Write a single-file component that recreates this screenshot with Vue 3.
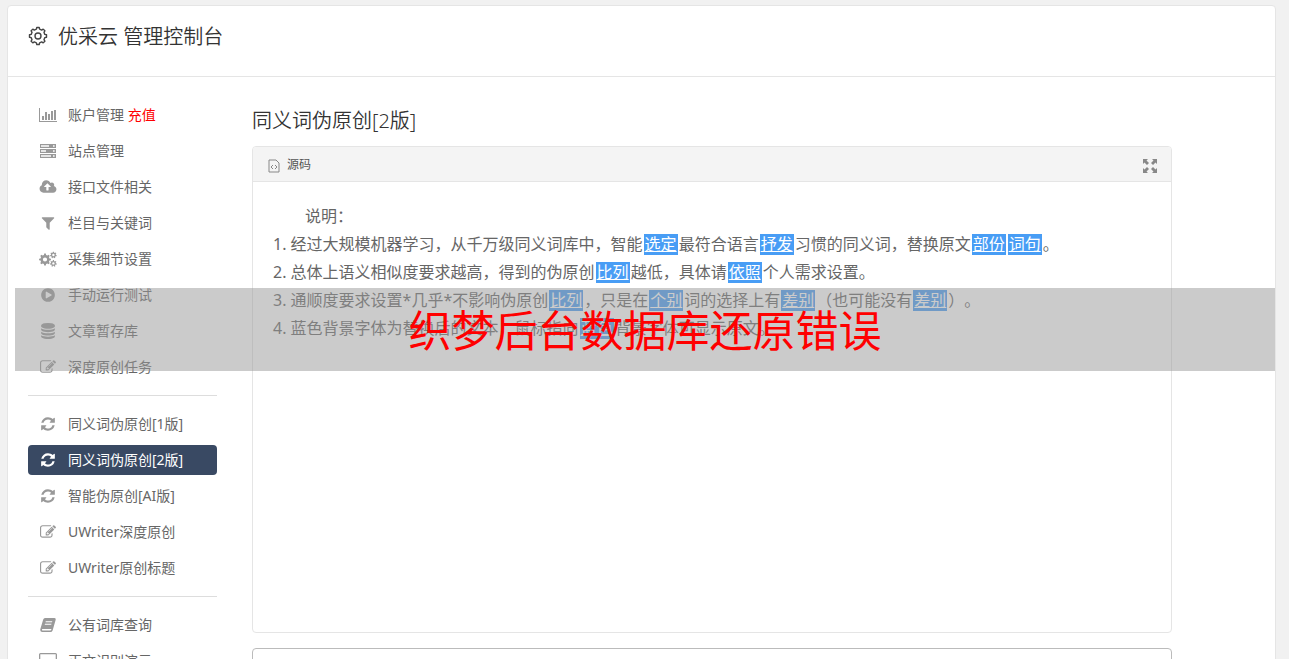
<script setup>
function gear(cx, cy, ro, ri, teeth) {
  const pts = []
  const step = (Math.PI * 2) / teeth
  for (let i = 0; i < teeth; i++) {
    const a = i * step - Math.PI / 2
    for (const [k, r] of [[-0.3, ri], [-0.18, ro], [0.18, ro], [0.3, ri]]) {
      pts.push(`${(cx + r * Math.cos(a + k * step)).toFixed(2)} ${(cy + r * Math.sin(a + k * step)).toFixed(2)}`)
    }
  }
  return `M${pts.join('L')}Z`
}
function ring(cx, cy, r) {
  return `M${cx - r} ${cy}a${r} ${r} 0 1 0 ${r * 2} 0a${r} ${r} 0 1 0 ${-r * 2} 0Z`
}

const edit = { box: '0 0 1792 1792', d: 'M888 1184l116-116-152-152-116 116v56h96v96h56zm440-720q-16-16-33 1l-350 350q-17 17-1 33t33-1l350-350q17-17 1-33zm80 594v190q0 119-84.5 203.5t-203.5 84.5h-832q-119 0-203.5-84.5t-84.5-203.5v-832q0-119 84.5-203.5t203.5-84.5h832q63 0 117 25 15 7 18 23 3 17-9 29l-49 49q-14 14-32 8-23-6-45-6h-832q-66 0-113 47t-47 113v832q0 66 47 113t113 47h832q66 0 113-47t47-113v-126q0-13 9-22l64-64q15-15 35-7t20 29zm-96-738l288 288-672 672h-288v-288zm444 132l-92 92-288-288 92-92q28-28 68-28t68 28l152 152q28 28 28 68t-28 68z' }
const refresh = { box: '0 0 1792 1792', d: 'M1639 1056q0 5-1 7-64 268-268 434.5t-478 166.5q-146 0-282.5-55t-243.5-157l-129 129q-19 19-45 19t-45-19-19-45v-448q0-26 19-45t45-19h448q26 0 45 19t19 45-19 45l-137 137q71 66 161 102t187 36q134 0 250-65t186-179q11-17 53-117 8-23 30-23h192q13 0 22.5 9.5t9.5 22.5zm25-800v448q0 26-19 45t-45 19h-448q-26 0-45-19t-19-45 19-45l138-138q-148-137-349-137-134 0-250 65t-186 179q-11 17-53 117-8 23-30 23h-199q-13 0-22.5-9.5t-9.5-22.5v-7q65-268 270-434.5t480-166.5q146 0 284 55.5t245 156.5l130-129q19-19 45-19t45 19 19 45z' }
const chart = { box: '0 0 18 16', d: 'M0 1h1v13h17v1H0ZM3 9h2v4H3ZM6 5h2v8H6ZM9 7h2v6H9ZM12 4h2v9h-2ZM15 3h2v10h-2Z' }
const server = { box: '0 0 18 16', d: 'M1 1h16v4H1ZM2 2.2v1.600h8V2.200ZM14 2.200v1.600h1.600V2.200ZM1 6h16v4H1ZM2 7.200v1.600h5V7.200ZM14 7.200v1.600h1.600V7.200ZM1 11h16v4H1ZM2 12.200v1.600h10v-1.600ZM14 12.200v1.600h1.600v-1.600Z' }
const cloud = { box: '0 0 2048 1792', d: 'M1344 864q0-14-9-23l-352-352q-9-9-23-9t-23 9l-351 351q-10 12-10 24 0 14 9 23t23 9h224v352q0 13 9.5 22.5t22.5 9.5h192q13 0 22.5-9.5t9.5-22.5v-352h224q13 0 22.5-9.5t9.5-22.5zm640 288q0 159-112.5 271.5t-271.5 112.5h-1088q-185 0-316.5-131.5t-131.5-316.5q0-130 70-240t188-165q-2-30-2-43 0-212 150-362t362-150q156 0 285.5 87t188.5 231q71-62 166-62 106 0 181 75t75 181q0 76-41 138 130 31 213.5 135.5t83.5 238.5z' }
const filter = { box: '0 0 1792 1792', d: 'M1595 295q17 41-14 70l-493 493v742q0 42-39 59-13 5-25 5-27 0-45-19l-256-256q-19-19-19-45v-486l-493-493q-31-29-14-70 17-39 59-39h1280q42 0 59 39z' }
const cogs = { box: '0 0 18 16', d: gear(6, 8.5, 6, 4.6, 8) + ring(6, 8.5, 2.1) + gear(14.4, 4, 3.4, 2.5, 7) + ring(14.4, 4, 1.2) + gear(14.4, 12.4, 3.4, 2.5, 7) + ring(14.4, 12.4, 1.2) }
const play = { box: '0 0 1792 1792', d: 'M896 128q209 0 385.5 103t279.5 279.5 103 385.5-103 385.5-279.5 279.5-385.5 103-385.5-103-279.5-279.5-103-385.5 103-385.5 279.5-279.5 385.5-103zm384 823q32-18 32-55t-32-55l-544-320q-31-19-64-1-32 19-32 56v640q0 37 32 56 16 8 32 8 17 0 32-9z' }
const database = { box: '0 0 1792 1792', d: 'M896 768q237 0 443-43t325-127v170q0 69-103 128t-280 93.5-385 34.5-385-34.5-280-93.5-103-128v-170q119 84 325 127t443 43zm0 768q237 0 443-43t325-127v170q0 69-103 128t-280 93.5-385 34.5-385-34.5-280-93.5-103-128v-170q119 84 325 127t443 43zm0-384q237 0 443-43t325-127v170q0 69-103 128t-280 93.5-385 34.5-385-34.5-280-93.5-103-128v-170q119 84 325 127t443 43zm0-1152q208 0 385 34.5t280 93.5 103 128v128q0 69-103 128t-280 93.5-385 34.5-385-34.5-280-93.5-103-128v-128q0-69 103-128t280-93.5 385-34.5z' }
const book = { box: '0 0 18 16', d: 'M6 1h9.5q1.6.2 1.2 1.8L13.6 13.4q-.6 1.6-2.2 1.6H3q-2-.3-1.8-2.4L4.200 2.600Q4.700 1 6 1ZM6.800 4.200 6.500 5.200h6.500l.3-1ZM6 6.700 5.700 7.700h6.500l.3-1ZM3 12.300q-.3 1.300.6 1.300h7.600q.8 0 1.100-1l.2-.6H3.600Q3.100 12 3 12.300Z' }
const desktop = { box: '0 0 18 16', d: 'M1.500 0h15q1.500 0 1.500 1.500v10q0 1.500-1.500 1.500H11l1 2H6l1-2H1.500Q0 13 0 11.500v-10Q0 0 1.500 0ZM1.300 1.300v8.700h15.400V1.300Z' }

const groups = [
  [
    { text: '账户管理', extra: '充值', icon: chart },
    { text: '站点管理', icon: server },
    { text: '接口文件相关', icon: cloud },
    { text: '栏目与关键词', icon: filter },
    { text: '采集细节设置', icon: cogs },
    { text: '手动运行测试', icon: play },
    { text: '文章暂存库', icon: database },
    { text: '深度原创任务', icon: edit },
  ],
  [
    { text: '同义词伪原创[1版]', icon: refresh },
    { text: '同义词伪原创[2版]', icon: refresh, active: true },
    { text: '智能伪原创[AI版]', icon: refresh },
    { text: 'UWriter深度原创', icon: edit },
    { text: 'UWriter原创标题', icon: edit },
  ],
  [
    { text: '公有词库查询', icon: book },
    { text: '正文识别演示', icon: desktop },
  ],
]

// Odd entries of each line are the replaced words.
const lines = [
  '1. 经过大规模机器学习，从千万级同义词库中，智能|选定|最符合语言|抒发|习惯的同义词，替换原文|部份||词句|。',
  '2. 总体上语义相似度要求越高，得到的伪原创|比列|越低，具体请|依照|个人需求设置。',
  '3. 通顺度要求设置*几乎*不影响伪原创|比列|，只是在|个别|词的选择上有|差别|（也可能没有|差别|）。',
  '4. 蓝色背景字体为替换后的文本，鼠标指向|蓝色|背景字体可显示原文。',
].map((l) => l.split('|'))
</script>

<template>
  <div class="page">
    <div class="panel">
      <header class="top">
        <svg class="top-icon" viewBox="0 0 20 20" aria-hidden="true">
          <path :d="gear(10, 10, 8.6, 7, 8)" />
          <circle cx="10" cy="10" r="3" />
        </svg>
        <h1>优采云 管理控制台</h1>
      </header>
      <div class="body">
        <nav class="side">
          <ul v-for="(g, gi) in groups" :key="gi">
            <li v-for="item in g" :key="item.text">
              <a href="#" :class="{ active: item.active }">
                <svg :viewBox="item.icon.box" aria-hidden="true"><path fill-rule="evenodd" :d="item.icon.d" /></svg>
                <span>{{ item.text }} <em v-if="item.extra">{{ item.extra }}</em></span>
              </a>
            </li>
          </ul>
        </nav>
        <main>
          <h2>同义词伪原创[2版]</h2>
          <section class="editor">
            <div class="toolbar">
              <button type="button">
                <svg class="file" viewBox="0 0 12 14" aria-hidden="true">
                  <path d="M1 1h7l3 3v9H1ZM5 6 3 8l2 2M7 6l2 2-2 2" />
                </svg>
                源码
              </button>
              <button type="button" aria-label="全屏">
                <svg class="full" viewBox="0 0 14 14" aria-hidden="true">
                  <path d="M0 0h5L3.500 1.500 6 4 4 6 1.500 3.500 0 5ZM14 0v5l-1.500-1.500L10 6 8 4l2.500-2.500L9 0ZM0 14V9l1.500 1.500L4 8l2 2-2.500 2.500L5 14ZM14 14H9l1.500-1.500L8 10l2-2 2.500 2.500L14 9Z" />
                </svg>
              </button>
            </div>
            <div class="text">
              <p class="intro">说明：</p>
              <p v-for="(l, i) in lines" :key="i"><template v-for="(s, j) in l" :key="j"><mark v-if="j % 2">{{ s }}</mark><template v-else>{{ s }}</template></template></p>
            </div>
          </section>
          <textarea aria-label="原文"></textarea>
        </main>
      </div>
    </div>
    <div class="banner">织梦后台数据库还原错误</div>
  </div>
</template>

<style>
body {
  margin: 0;
  background: #f1f1f1;
}
</style>

<style scoped>
.page {
  position: relative;
  box-sizing: border-box;
  height: 100vh;
  padding: 5px 13px 0 7px;
  overflow: hidden;
  font-family: "Noto Sans", "Noto Sans CJK SC", sans-serif;
  font-weight: 400;
  text-spacing-trim: space-all;
  color: #666;
}
.panel {
  min-height: 100%;
  background: #fff;
  border: 1px solid #e5e5e5;
  border-radius: 4px;
}
.top {
  display: flex;
  align-items: center;
  gap: 10px;
  height: 71px;
  padding: 0 20px 8px;
  border-bottom: 1px solid #e5e5e5;
  box-sizing: border-box;
}
.top-icon {
  width: 20px;
  height: 20px;
  margin-bottom: 2px;
  fill: none;
  stroke: #444;
  stroke-width: 1.4;
  stroke-linejoin: round;
}
h1,
h2 {
  margin: 0;
  font-size: 20px;
  line-height: 28px;
  font-weight: 350;
  color: #333;
}
.body {
  display: flex;
  gap: 35px;
  padding: 23px 103px 0 20px;
}
.side {
  flex: 0 0 189px;
}
ul {
  display: flex;
  flex-direction: column;
  gap: 6px;
  margin: 0;
  padding: 0;
  list-style: none;
}
ul + ul {
  margin-top: 13px;
  padding-top: 13px;
  border-top: 1px solid #ddd;
}
.side a {
  display: flex;
  align-items: center;
  gap: 11px;
  height: 30px;
  padding-left: 11px;
  border-radius: 4px;
  font-size: 14px;
  line-height: 30px;
  color: #666;
  text-decoration: none;
}
.side svg {
  width: 18px;
  height: 16px;
  fill: #999;
}
.side em {
  font-style: normal;
  color: #f00;
}
.side .active {
  background: #394963;
  color: #fff;
}
.side .active svg {
  fill: #fff;
}
main {
  flex: 1;
  min-width: 0;
  padding-top: 7px;
}
.editor {
  box-sizing: border-box;
  min-height: 487px;
  margin: 11px 0 15px;
  border: 1px solid #e5e5e5;
  border-radius: 4px;
  overflow: hidden;
}
.toolbar {
  box-sizing: border-box;
  display: flex;
  justify-content: space-between;
  align-items: center;
  height: 35px;
  padding: 2px 14px 0;
  background: #f4f4f4;
  border-bottom: 1px solid #e5e5e5;
}
button {
  display: flex;
  align-items: center;
  gap: 6px;
  padding: 0;
  border: 0;
  background: none;
  font: inherit;
  font-size: 12px;
  line-height: 20px;
  color: #555;
}
button svg {
  width: 14px;
  height: 14px;
  margin-top: 2px;
}
.file {
  fill: none;
  stroke: #888;
}
.full {
  fill: #888;
}
.text {
  padding: 20px;
  font-size: 16px;
  line-height: 28px;
}
p {
  margin: 0;
}
.intro {
  text-indent: 2em;
}
mark {
  display: inline-block;
  margin: 0 1px;
  padding: 0 1px;
  line-height: 21px;
  background: #489df5;
  color: #fff;
  text-decoration: underline;
}
textarea {
  display: block;
  box-sizing: border-box;
  width: 100%;
  height: 200px;
  border: 1px solid #bbb;
  border-radius: 4px;
  resize: none;
}
.banner {
  position: absolute;
  top: 288px;
  left: 15px;
  right: 14px;
  padding-top: 3px;
  background: rgba(151, 151, 151, 0.5);
  color: #f00;
  font-size: 43px;
  line-height: 80px;
  text-align: center;
}
</style>
